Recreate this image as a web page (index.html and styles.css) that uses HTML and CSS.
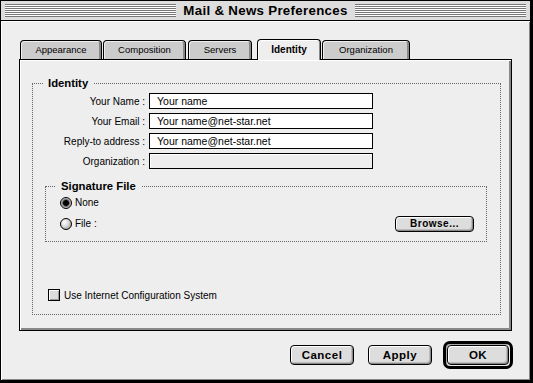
FILE: index.html
```html
<!DOCTYPE html>
<html lang="en">
<head>
    <meta charset="UTF-8">
    <title>Mail &amp; News Preferences</title>
    <link rel="stylesheet" href="styles.css">
</head>
<body>
    <div class="window">
        <div class="titlebar">
            <span class="stripes"></span>
            <span class="title">Mail &amp; News Preferences</span>
            <span class="stripes"></span>
        </div>

        <div class="content">
            <div class="tabs">
                <div class="tab tab-appearance">Appearance</div>
                <div class="tab tab-composition">Composition</div>
                <div class="tab tab-servers">Servers</div>
                <div class="tab tab-identity active">Identity</div>
                <div class="tab tab-organization">Organization</div>
            </div>

            <div class="panel">
                <fieldset class="group identity">
                    <legend>Identity</legend>

                    <div class="fields">
                        <label class="field-label">Your Name :</label>
                        <div class="text-field">Your name</div>

                        <label class="field-label">Your Email :</label>
                        <div class="text-field">Your name@net-star.net</div>

                        <label class="field-label">Reply-to address :</label>
                        <div class="text-field">Your name@net-star.net</div>

                        <label class="field-label">Organization :</label>
                        <div class="text-field disabled"></div>
                    </div>

                    <fieldset class="group signature">
                        <legend>Signature File</legend>
                        <div class="radio-row">
                            <span class="radio checked"></span>
                            <span>None</span>
                        </div>
                        <div class="radio-row">
                            <span class="radio"></span>
                            <span>File :</span>
                            <button class="btn btn-browse">Browse...</button>
                        </div>
                    </fieldset>

                    <div class="check-row">
                        <span class="checkbox"></span>
                        <span>Use Internet Configuration System</span>
                    </div>
                </fieldset>
            </div>

            <div class="actions">
                <button class="btn">Cancel</button>
                <button class="btn">Apply</button>
                <div class="default-ring">
                    <button class="btn btn-ok">OK</button>
                </div>
            </div>
        </div>
    </div>
</body>
</html>
```

FILE: styles.css
```css
body {
    margin: 0;
    padding: 0;
    background-color: #eeeeee;
    font-family: "Liberation Sans", Arial, sans-serif;
    font-size: 10px;
    color: #000;
}
.window {
    width: 533px;
    height: 383px;
    box-sizing: border-box;
    border: 1px solid #000;
    border-right-width: 3px;
    border-bottom-width: 3px;
    background-color: #eeeeee;
    box-shadow: inset 1px 1px 0 #fff, inset -1px -1px 0 #888;
    display: flex;
    flex-direction: column;
}
.titlebar {
    height: 19px;
    border-bottom: 1px solid #000;
    background-color: #dddddd;
    display: flex;
    align-items: center;
    padding: 0 4px;
    gap: 7px;
}
.stripes {
    flex: 1;
    height: 13px;
    background: repeating-linear-gradient(to bottom, #777 0, #777 1px, #fff 1px, #fff 2px);
}
.title {
    font-weight: bold;
    font-size: 13.3px;
    letter-spacing: 0.3px;
}
.content {
    flex: 1;
    padding: 19px 18px 0 18px;
    box-shadow: inset 0 1px 0 #fff;
}

/* tabs */
.tabs {
    display: flex;
    align-items: flex-end;
    height: 20px;
    margin-top: -1px;
    padding-left: 1px;
}
.tab {
    height: 19px;
    box-sizing: border-box;
    border: 1px solid #000;
    border-bottom: none;
    border-radius: 4px 4px 0 0;
    background-color: #cccccc;
    box-shadow: inset 1px 1px 0 #eee, inset -2px 0 0 #888;
    text-align: center;
    line-height: 18px;
    font-size: 9.5px;
}
.tab-appearance { width: 82px; }
.tab-composition { width: 83px; margin-left: 1px; }
.tab-servers { width: 64px; margin-left: 2px; }
.tab-identity { width: 64px; margin-left: 5px; }
.tab-organization { width: 88px; margin-left: 1px; }
.tab.active {
    height: 21px;
    margin-bottom: -1px;
    background-color: #eeeeee;
    box-shadow: inset 1px 1px 0 #fff, inset -1px 0 0 #888;
    font-weight: bold;
    font-size: 10px;
    line-height: 19px;
    position: relative;
}

/* panel */
.panel {
    width: 493px;
    height: 272px;
    box-sizing: border-box;
    border: 1px solid #000;
    box-shadow: inset 1px 1px 0 #fff, inset -2px -2px 0 #888;
    padding: 18px 10px 0 12px;
}
.group {
    margin: 0;
    border: 1px dotted #666;
    padding: 0;
}
.group legend {
    font-weight: bold;
    font-size: 11.3px;
    padding: 0 5px;
    margin-left: 10px;
    line-height: 10px;
}
.identity {
    height: 237px;
    box-sizing: border-box;
}
.fields {
    display: grid;
    grid-template-columns: 112px 224px;
    column-gap: 4px;
    row-gap: 4px;
    margin-top: 5px;
    align-items: center;
}
.field-label {
    text-align: right;
}
.text-field {
    height: 16px;
    box-sizing: border-box;
    border: 1px solid #000;
    background-color: #fff;
    padding-left: 7px;
    line-height: 14px;
    font-size: 10.5px;
}
.text-field.disabled {
    background-color: #eeeeee;
    box-shadow: inset 1px 1px 0 #fff;
}

.signature {
    margin: 12px 13px 0 12px;
    height: 61px;
    box-sizing: border-box;
    padding: 5px 12px 0 14px;
}
.signature legend {
    margin-left: -4px;
}
.radio-row {
    display: flex;
    align-items: center;
    gap: 3px;
    height: 13px;
}
.radio-row + .radio-row {
    margin-top: 8px;
}
.radio {
    width: 12px;
    height: 12px;
    box-sizing: border-box;
    border-radius: 50%;
    border: 1px solid #000;
    background: radial-gradient(circle at 35% 35%, #fff 0, #ddd 40%, #888 100%);
}
.radio.checked {
    background: radial-gradient(circle, #000 0, #000 2.5px, #444 3px, #999 4px, #ccc 5px);
}
.btn {
    font-family: "Liberation Sans", Arial, sans-serif;
    font-weight: bold;
    font-size: 11.5px;
    letter-spacing: 0.5px;
    color: #000;
    background-color: #dddddd;
    border: 1px solid #000;
    border-radius: 4px;
    box-shadow: inset 1px 1px 0 #fff, inset -1px -1px 0 #888, inset -2px -2px 0 #bbb;
    padding: 0;
    cursor: pointer;
}
.btn-browse {
    margin-left: auto;
    width: 79px;
    height: 16px;
    font-size: 10px;
    line-height: 13px;
}
.check-row {
    display: flex;
    align-items: center;
    gap: 4px;
    margin: 47px 0 0 15px;
}
.checkbox {
    width: 12px;
    height: 12px;
    box-sizing: border-box;
    border: 1px solid #000;
    background-color: #dddddd;
    box-shadow: inset 1px 1px 0 #fff, inset -1px -1px 0 #999;
}

/* bottom buttons */
.actions {
    display: flex;
    justify-content: flex-end;
    align-items: center;
    gap: 14px;
    margin-top: 10px;
    margin-right: -1px;
}
.actions .btn {
    width: 64px;
    height: 20px;
}
.default-ring {
    border: 3px solid #000;
    border-radius: 7px;
    padding: 1px;
    margin-left: -3px;
    background-color: #eee;
    box-shadow: inset 1px 1px 0 #aaa;
}
.actions .btn-ok {
    display: block;
    width: 62px;
}
```
